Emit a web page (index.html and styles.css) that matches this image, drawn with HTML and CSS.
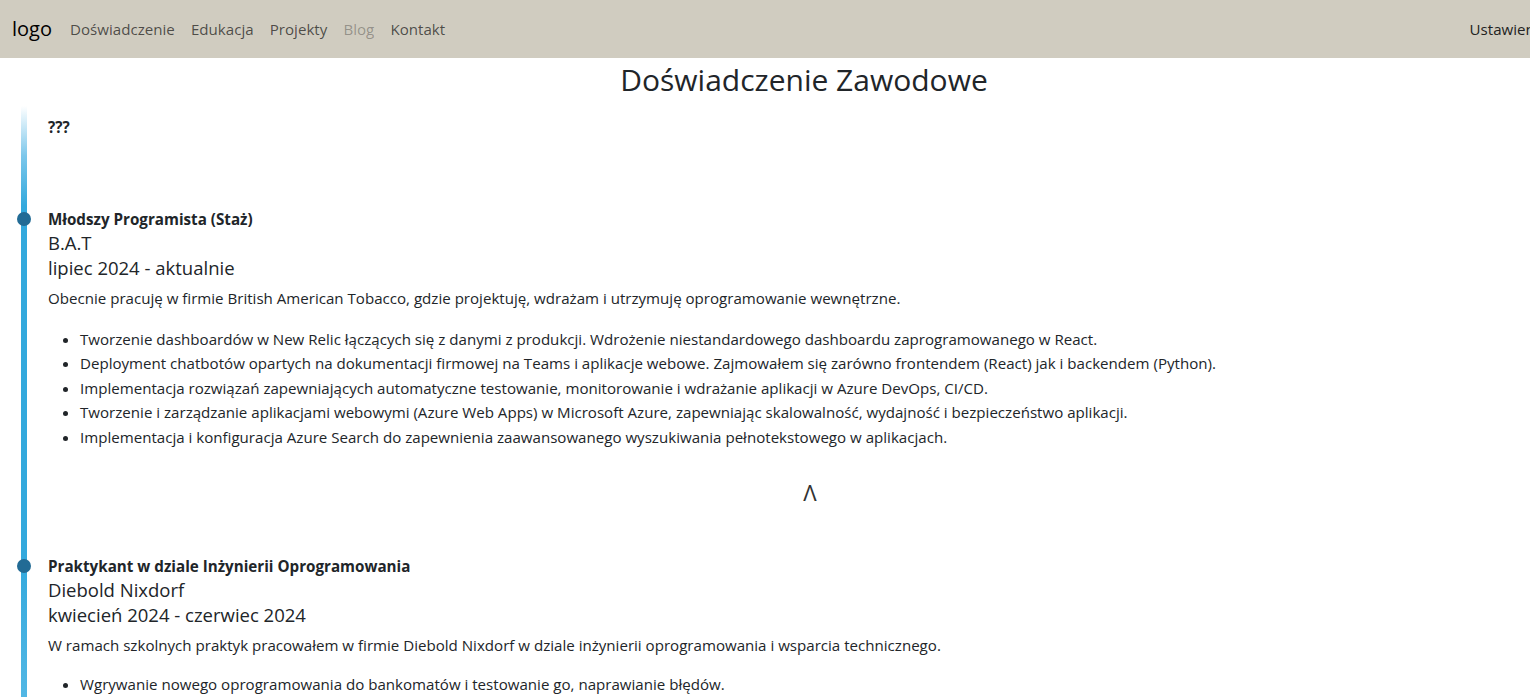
FILE: index.html
```html
<!DOCTYPE html>
<html lang="pl">
<head>
<meta charset="utf-8">
<title>Doświadczenie</title>
<link rel="stylesheet" href="styles.css">
</head>
<body>
<nav class="navbar">
  <div class="nav-left">
    <span class="brand">logo</span>
    <a class="nav-link">Doświadczenie</a>
    <a class="nav-link">Edukacja</a>
    <a class="nav-link">Projekty</a>
    <a class="nav-link disabled">Blog</a>
    <a class="nav-link">Kontakt</a>
  </div>
  <a class="nav-link settings">Ustawienia</a>
</nav>
<main class="main">
  <h2 class="page-title">Doświadczenie Zawodowe</h2>
  <div class="timeline">
    <div class="entry entry-top">
      <div class="entry-title">???</div>
    </div>
    <div class="entry">
      <span class="dot"></span>
      <div class="entry-title">Młodszy Programista (Staż)</div>
      <div class="entry-sub">B.A.T</div>
      <div class="entry-sub">lipiec 2024 - aktualnie</div>
      <p class="entry-desc">Obecnie pracuję w firmie British American Tobacco, gdzie projektuję, wdrażam i utrzymuję oprogramowanie wewnętrzne.</p>
      <ul class="entry-list">
        <li>Tworzenie dashboardów w New Relic łączących się z danymi z produkcji. Wdrożenie niestandardowego dashboardu zaprogramowanego w React.</li>
        <li>Deployment chatbotów opartych na dokumentacji firmowej na Teams i aplikacje webowe. Zajmowałem się zarówno frontendem (React) jak i backendem (Python).</li>
        <li>Implementacja rozwiązań zapewniających automatyczne testowanie, monitorowanie i wdrażanie aplikacji w Azure DevOps, CI/CD.</li>
        <li>Tworzenie i zarządzanie aplikacjami webowymi (Azure Web Apps) w Microsoft Azure, zapewniając skalowalność, wydajność i bezpieczeństwo aplikacji.</li>
        <li>Implementacja i konfiguracja Azure Search do zapewnienia zaawansowanego wyszukiwania pełnotekstowego w aplikacjach.</li>
      </ul>
      <div class="toggle">Ʌ</div>
    </div>
    <div class="entry">
      <span class="dot"></span>
      <div class="entry-title">Praktykant w dziale Inżynierii Oprogramowania</div>
      <div class="entry-sub">Diebold Nixdorf</div>
      <div class="entry-sub">kwiecień 2024 - czerwiec 2024</div>
      <p class="entry-desc entry-desc-2">W ramach szkolnych praktyk pracowałem w firmie Diebold Nixdorf w dziale inżynierii oprogramowania i wsparcia technicznego.</p>
      <ul class="entry-list">
        <li>Wgrywanie nowego oprogramowania do bankomatów i testowanie go, naprawianie błędów.</li>
        <li>Konfiguracja i diagnostyka urządzeń, wsparcie techniczne.</li>
      </ul>
    </div>
  </div>
</main>
</body>
</html>
```

FILE: styles.css
```css
html, body {
  margin: 0;
  padding: 0;
  overflow: hidden;
}
body {
  font-family: "Open Sans", "Noto Sans", sans-serif;
  color: #212529;
  background: #fff;
  font-size: 15.1px;
  line-height: 24.5px;
}
.navbar {
  height: 58px;
  background: #d0ccc0;
  display: flex;
  align-items: center;
  justify-content: space-between;
  box-sizing: border-box;
  padding: 0 0 0 12px;
  width: 1555px;
}
.nav-left {
  display: flex;
  align-items: center;
}
.brand {
  font-size: 20px;
  color: #000;
  margin-right: 10px;
  line-height: 30px;
}
.nav-link {
  font-size: 15.1px;
  color: rgba(0,0,0,0.65);
  padding: 0 8.1px;
  line-height: 24px;
}
.nav-link.disabled {
  color: rgba(0,0,0,0.3);
}
.settings {
  padding: 0 8px 0 0;
  color: #222;
}
.main {
  position: relative;
}
.page-title {
  margin: 0;
  font-weight: 400;
  font-size: 30px;
  line-height: 44px;
  text-align: center;
  padding: 0 0 0 78px;
  color: #212529;
}
.timeline {
  position: relative;
  margin-left: 21px;
  padding-left: 27px;
  padding-top: 6px;
}
.timeline::before {
  content: "";
  position: absolute;
  left: 0;
  top: 4px;
  bottom: -200px;
  width: 6px;
  background: linear-gradient(to bottom, #ffffff 0px, #7cc7eb 50px, #33a9dd 100px, #33a9dd 450px, #54b8e5 600px, #99d3ef 800px);
}
.entry {
  position: relative;
}
.entry-top {
  padding-top: 8px;
  height: 92px;
}
.entry-title {
  font-weight: 700;
  font-size: 15.2px;
  line-height: 22px;
  color: #212529;
}
.dot {
  position: absolute;
  left: -31px;
  top: 4px;
  width: 14px;
  height: 14px;
  border-radius: 50%;
  background: #226b95;
}
.entry-sub {
  font-size: 18.5px;
  line-height: 25px;
}
.entry-desc {
  margin: 6px 0 16px;
}
.entry-desc-2 {
  margin-top: 6px;
  margin-bottom: 14px;
}
.entry-list {
  margin: 0;
  padding-left: 32px;
}
.toggle {
  text-align: center;
  font-size: 22px;
  line-height: 32px;
  padding: 27px 0 0 0;
  height: 79px;
  color: #333;
  box-sizing: content-box;
  width: 1524px;
}
```
